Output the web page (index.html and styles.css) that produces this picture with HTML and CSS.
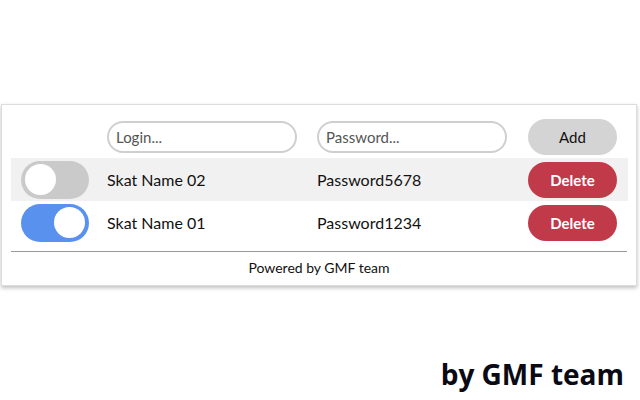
FILE: index.html
```html
<!DOCTYPE html>
<html lang="en">
<head>
    <meta charset="UTF-8">
    <title>Skat passwords</title>
    <link rel="stylesheet" href="styles.css">
</head>
<body>
    <div class="popup">
        <div class="row head">
            <div class="cell"></div>
            <div class="cell"><input type="text" class="field" placeholder="Login..."></div>
            <div class="cell"><input type="text" class="field" placeholder="Password..."></div>
            <div class="cell"><button class="btn add">Add</button></div>
        </div>
        <div class="row grey">
            <div class="cell"><span class="switch"><span class="knob"></span></span></div>
            <div class="cell">Skat Name 02</div>
            <div class="cell">Password5678</div>
            <div class="cell"><button class="btn del">Delete</button></div>
        </div>
        <div class="row">
            <div class="cell"><span class="switch on"><span class="knob"></span></span></div>
            <div class="cell">Skat Name 01</div>
            <div class="cell">Password1234</div>
            <div class="cell"><button class="btn del">Delete</button></div>
        </div>
        <div class="footer">Powered by GMF team</div>
    </div>
    <div class="sign">by GMF team</div>
</body>
</html>
```

FILE: styles.css
```css
body {
    margin: 0;
    background: #fff;
    font-family: Lato, "DejaVu Sans", sans-serif;
    color: #111;
}
.popup {
    width: 617px;
    margin: 104px 0 0 1px;
    padding: 10px 8px 0 9px;
    border: 1px solid #dcdcdc;
    box-shadow: 0 2px 4px rgba(0,0,0,0.25);
}
.row {
    display: grid;
    grid-template-columns: 86px 210px 211px 89px;
    align-items: center;
    height: 43px;
    padding: 0 11px 0 10px;
    font-size: 16px;
}
.row.grey {
    background: #f1f1f1;
}
.field {
    box-sizing: border-box;
    width: 190px;
    height: 32px;
    border: 2px solid #cfcfcf;
    border-radius: 16px;
    padding: 0 7px;
    font-family: inherit;
    font-size: 15px;
    color: #222;
    outline: none;
}
.field::placeholder {
    color: #555;
}
.btn {
    width: 89px;
    height: 36px;
    border: none;
    border-radius: 18px;
    font-family: inherit;
    font-size: 15px;
    cursor: pointer;
}
.add {
    background: #d4d4d4;
    color: #111;
}
.del {
    background: #c13a4a;
    color: #fff;
    font-weight: bold;
}
.switch {
    display: flex;
    align-items: center;
    box-sizing: border-box;
    width: 68px;
    height: 38px;
    padding: 0 4px;
    border-radius: 19px;
    background: #cacaca;
}
.switch.on {
    background: #5991ee;
    justify-content: flex-end;
}
.knob {
    width: 31px;
    height: 31px;
    border-radius: 50%;
    background: #fff;
}
.footer {
    margin: 7px 1px 0 0;
    border-top: 1px solid #999;
    height: 33px;
    line-height: 32px;
    text-align: center;
    font-size: 14px;
}
.sign {
    margin: 69px 16px 0 0;
    text-align: right;
    font-family: "Open Sans", sans-serif;
    font-weight: bold;
    font-size: 28px;
    color: #0a0a14;
}
```
